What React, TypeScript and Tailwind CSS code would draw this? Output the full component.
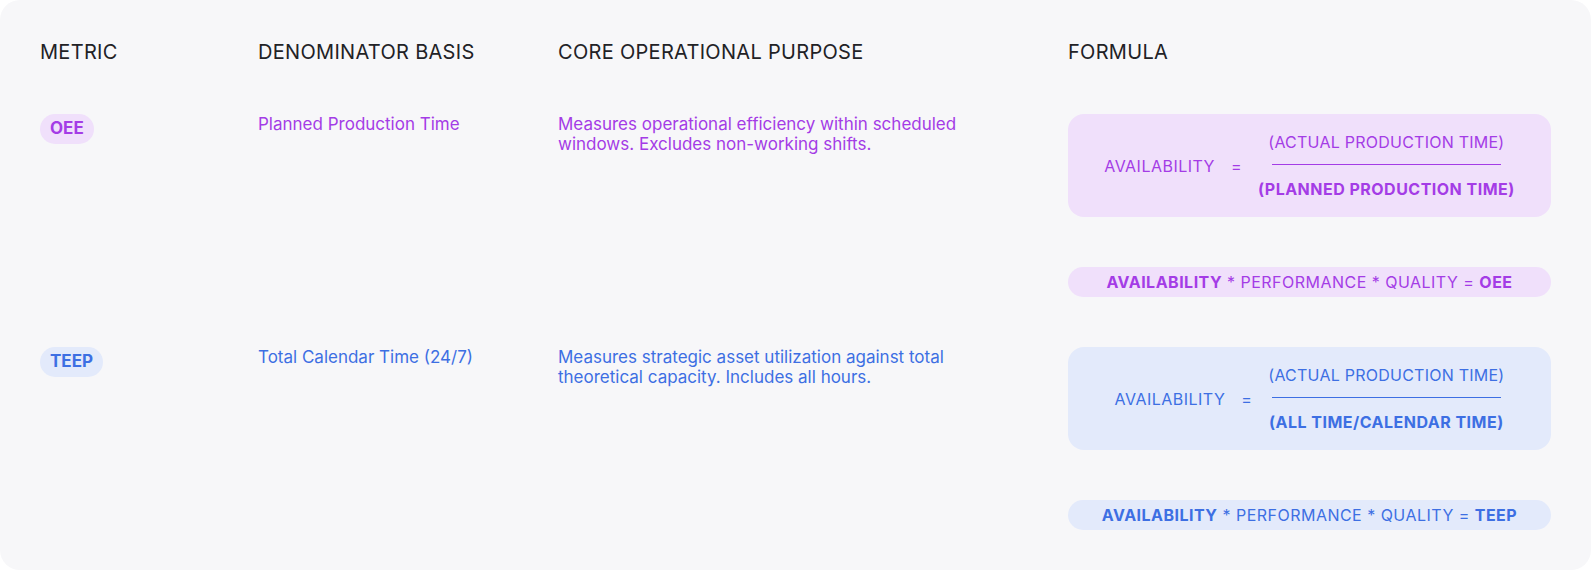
import React from "react";

type Theme = {
  text: string;
  soft: string;
};

const purple: Theme = { text: "text-[#a43ce6]", soft: "bg-[#f0e0fb]" };
const blue: Theme = { text: "text-[#3d6fe3]", soft: "bg-[#e3eafb]" };

function FormulaBox({
  theme,
  denominator,
}: {
  theme: Theme;
  denominator: string;
}) {
  return (
    <div
      className={`flex h-[103px] items-center justify-center gap-4 rounded-[16px] ${theme.soft} ${theme.text} text-base tracking-[0.03em]`}
    >
      <span className="leading-6">AVAILABILITY</span>
      <span className="leading-6">=</span>
      <div className="flex flex-col items-center">
        <span className="leading-6 tracking-[0.015em]">(ACTUAL PRODUCTION TIME)</span>
        <div className="mt-[10px] h-[1.5px] w-[229px] bg-current" />
        <span className="mt-[12px] font-bold leading-6">{denominator}</span>
      </div>
    </div>
  );
}

function Pill({ theme, result }: { theme: Theme; result: string }) {
  return (
    <div
      className={`flex h-[30px] items-center justify-center rounded-full ${theme.soft} ${theme.text} text-base tracking-[0.03em]`}
    >
      <span>
        <b className="font-bold">AVAILABILITY</b> * PERFORMANCE * QUALITY ={" "}
        <b className="font-bold">{result}</b>
      </span>
    </div>
  );
}

function Row({
  theme,
  metric,
  basis,
  purpose,
  denominator,
}: {
  theme: Theme;
  metric: string;
  basis: string;
  purpose: string;
  denominator: string;
}) {
  return (
    <div className="grid grid-cols-[218px_300px_510px_1fr] items-start">
      <div>
        <span
          className={`inline-flex h-[30px] items-center rounded-full px-2.5 text-[17px] font-bold ${theme.soft} ${theme.text}`}
        >
          {metric}
        </span>
      </div>
      <div className={`text-[17px] leading-5 ${theme.text}`}>{basis}</div>
      <div className={`max-w-[470px] text-[17px] leading-5 ${theme.text}`}>
        {purpose}
      </div>
      <div className="flex flex-col gap-[50px]">
        <FormulaBox theme={theme} denominator={denominator} />
        <Pill theme={theme} result={metric} />
      </div>
    </div>
  );
}

export default function App() {
  return (
    <div className="min-h-screen bg-white font-['Inter',sans-serif]">
      <div className="h-[570px] rounded-[20px] bg-[#f7f7f9] px-10 pt-[38px]">
        <div className="grid grid-cols-[218px_300px_510px_1fr] text-xl leading-7 tracking-[0.015em] text-[#222226]">
          <div>METRIC</div>
          <div>DENOMINATOR BASIS</div>
          <div>CORE OPERATIONAL PURPOSE</div>
          <div>FORMULA</div>
        </div>
        <div className="mt-12 flex flex-col gap-[50px]">
          <Row
            theme={purple}
            metric="OEE"
            basis="Planned Production Time"
            purpose="Measures operational efficiency within scheduled windows. Excludes non-working shifts."
            denominator="(PLANNED PRODUCTION TIME)"
          />
          <Row
            theme={blue}
            metric="TEEP"
            basis="Total Calendar Time (24/7)"
            purpose="Measures strategic asset utilization against total theoretical capacity. Includes all hours."
            denominator="(ALL TIME/CALENDAR TIME)"
          />
        </div>
      </div>
    </div>
  );
}
